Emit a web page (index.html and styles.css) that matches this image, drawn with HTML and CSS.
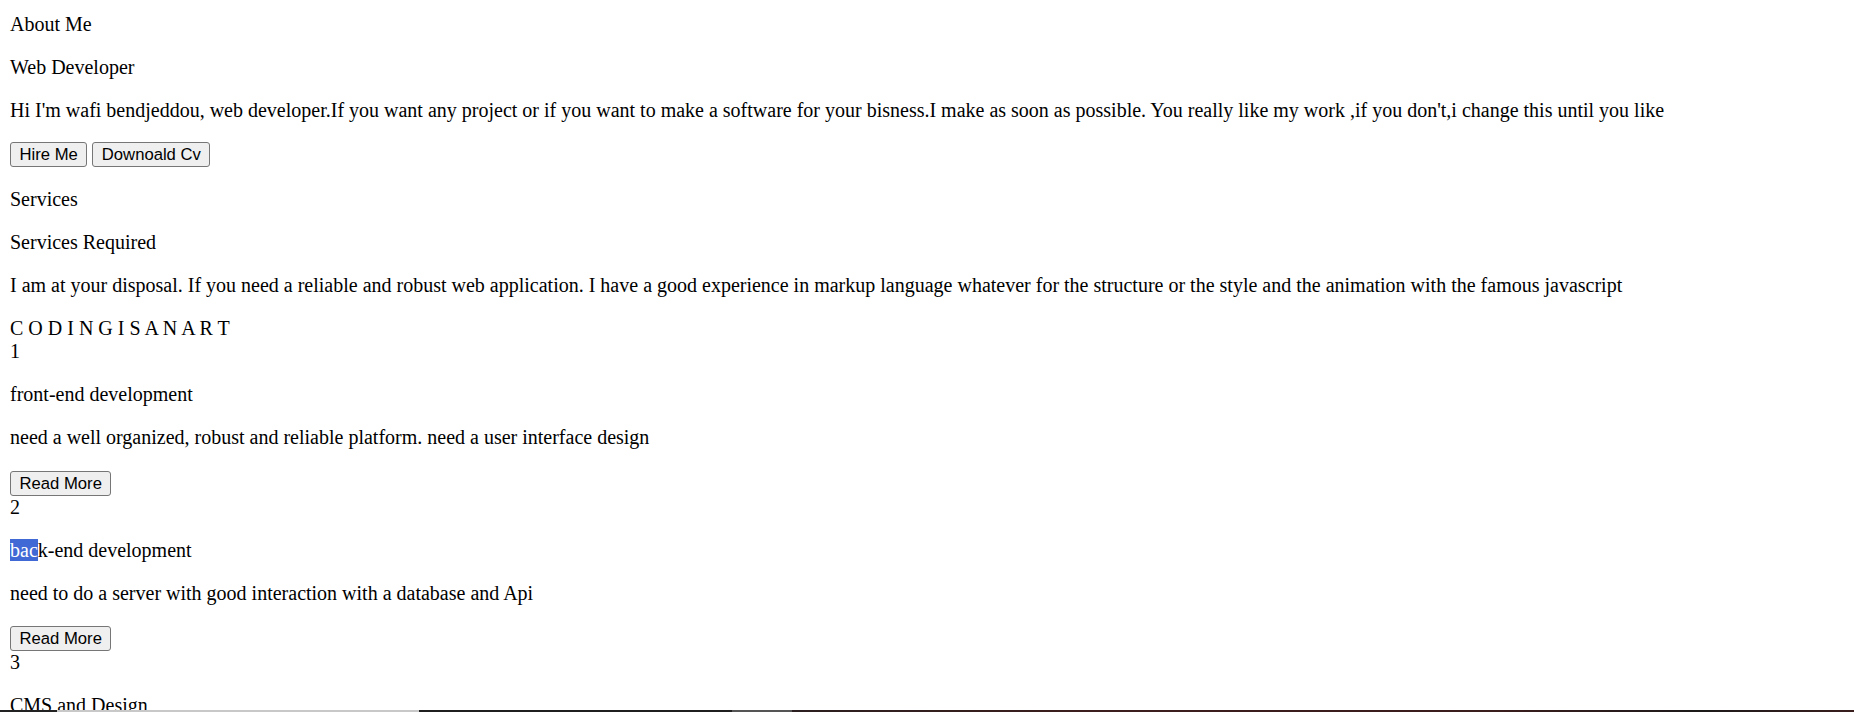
FILE: index.html
```html
<!DOCTYPE html>
<html lang="en">
<head>
<meta charset="utf-8">
<title>Portfolio</title>
<link rel="stylesheet" href="styles.css">
</head>
<body>
<main class="page">
  <section class="about">
    <p class="first">About Me</p>
    <p>Web Developer</p>
    <p>Hi I'm wafi bendjeddou, web developer.If you want any project or if you want to make a software for your bisness.I make as soon as possible. You really like my work ,if you don't,i change this until you like</p>
    <div class="actions">
      <button class="btn">Hire Me</button>
      <button class="btn">Downoald Cv</button>
    </div>
  </section>
  <section class="services">
    <p>Services</p>
    <p>Services Required</p>
    <p>I am at your disposal. If you need a reliable and robust web application. I have a good experience in markup language whatever for the structure or the style and the animation with the famous javascript</p>
    <div class="motto">C O D I N G I S A N A R T</div>
    <div class="card">
      <div class="num">1</div>
      <p>front-end development</p>
      <p>need a well organized, robust and reliable platform. need a user interface design</p>
      <div class="card-action"><button class="btn">Read More</button></div>
    </div>
    <div class="card">
      <div class="num">2</div>
      <p><span class="selected">bac</span>k-end development</p>
      <p>need to do a server with good interaction with a database and Api</p>
      <div class="card-action"><button class="btn">Read More</button></div>
    </div>
    <div class="card">
      <div class="num">3</div>
      <p>CMS and Design</p>
    </div>
  </section>
</main>
<div class="taskbar-edge"></div>
</body>
</html>
```
FILE: styles.css
```css
html {
  background: #ffffff;
}

body {
  margin: 0;
  padding: 0 10px;
  font-family: "Liberation Serif", "Times New Roman", serif;
  font-size: 20px;
  line-height: 23px;
  color: #000000;
}

.page p {
  margin: 20px 0;
}

.page p.first {
  margin-top: 13px;
}

.actions {
  display: flex;
  gap: 5px;
  padding-bottom: 0.5px;
}

.btn {
  font-family: "Liberation Sans", Arial, sans-serif;
  font-size: 16.67px;
  line-height: 19px;
  color: #000000;
  background: #efefef;
  border: 1px solid #767676;
  border-radius: 3px;
  padding: 2px 8.5px;
  margin: 0;
}

.motto {
  margin-top: 20.5px;
  line-height: 23px;
}

.num {
  line-height: 23px;
}

.card-action {
  display: flex;
  padding-top: 1.5px;
}

.selected {
  background: #4169d6;
  color: #ffffff;
}

.taskbar-edge {
  position: fixed;
  left: 0;
  right: 0;
  bottom: 0;
  height: 2px;
  background: linear-gradient(to right,
    #222222 0px, #222222 57px,
    #c8c8c8 57px, #c8c8c8 419px,
    #1f1f1f 419px, #1f1f1f 732px,
    #555555 732px, #555555 792px,
    #2c1f1f 792px, #3d1e1e 1100px, #3a1d1d 1500px, #1d1a1a 1700px, #3a1e1e 1854px);
}
```
